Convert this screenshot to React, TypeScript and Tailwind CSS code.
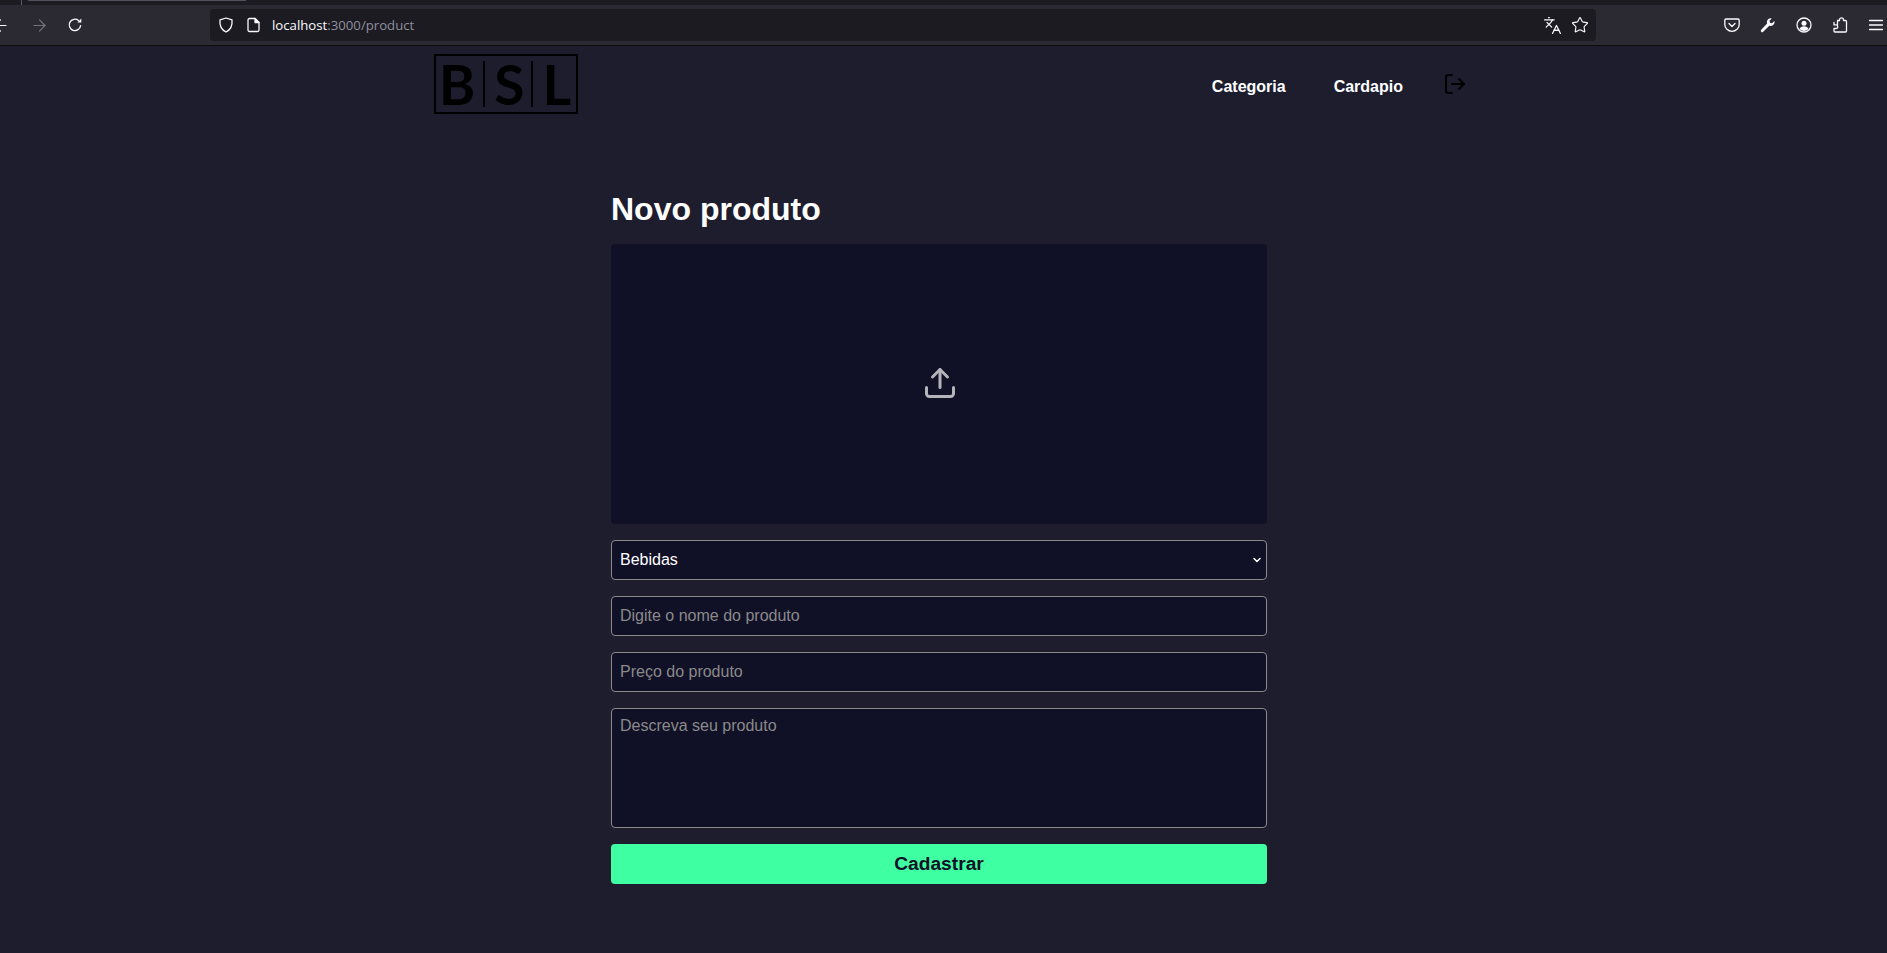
import { ArrowLeft, ArrowRight, Languages, Star, LogOut, Upload, ChevronDown } from "lucide-react";

function Ico({ children, className = "" }: { children: React.ReactNode; className?: string }) {
  return (
    <svg width="16" height="16" viewBox="0 0 16 16" fill="none" stroke="currentColor" strokeWidth="1.3" strokeLinejoin="round" strokeLinecap="round" className={"shrink-0 " + className}>
      {children}
    </svg>
  );
}

function Toolbar() {
  return (
    <div className="flex h-[46px] flex-col bg-[#2b2a33] font-['Open_Sans',sans-serif]">
      <div className="flex h-[5px] bg-[#1c1b22]">
        <div className="ml-[21px] h-[5px] w-px bg-[#5b5b66]" />
        <div className="ml-[6px] h-px w-[218px] bg-[#52525e]" />
      </div>
      <div className="flex flex-1 items-center border-b border-[#0c0c0d] text-[#fbfbfe]">
        <div className="flex w-[210px] items-center">
          <ArrowLeft size={19} strokeWidth={1.4} className="ml-[-9px]" />
          <ArrowRight size={19} strokeWidth={1.4} className="ml-[20px] text-[#75747c]" />
          <Ico className="ml-[18px]">
            <path d="M13.6 8.6A5.7 5.7 0 1 1 11.5 3.4" />
            <path d="M14.3 1.4v4h-4z" fill="currentColor" stroke="none" />
          </Ico>
        </div>
        <div className="flex h-[32px] w-[1386px] items-center rounded bg-[#1c1b22] pl-[8px] pr-[8px]">
          <Ico>
            <path d="M8 1 2 2.8C1.5 8 2.8 12.6 8 15c5.2-2.4 6.500-7 6-12.200Z" />
          </Ico>
          <Ico className="ml-[12px]">
            <path d="M3.500 1.500h5.500l4 4v7.500a1.500 1.500 0 0 1-1.500 1.500h-8a1.500 1.500 0 0 1-1.500-1.500v-10a1.500 1.500 0 0 1 1.500-1.500Z" />
            <path d="M9 1.500v4h4z" fill="currentColor" />
          </Ico>
          <span className="ml-[10px] translate-y-[1px] text-[13.2px]">
            localhost<span className="text-[#8f8f9d]">:3000/product</span>
          </span>
          <Languages size={19} strokeWidth={1.6} className="ml-auto" />
          <Star size={18} strokeWidth={1.5} className="ml-[9px] mr-[-1px]" />
        </div>
        <div className="ml-[128px] flex items-center gap-[20px]">
          <Ico>
            <path d="M2 2h12a1.200 1.200 0 0 1 1.200 1.200V7.500a7.200 6.800 0 0 1-14.400 0V3.200A1.200 1.200 0 0 1 2 2Z" />
            <path d="M5 6.500 8 9.500l3-3" />
          </Ico>
          <Ico>
            <path d="M10.500 1.200a4 4 0 0 0-3.400 5.400L1.200 12.700a1.400 1.400 0 0 0 2 2l6.100-5.900a4 4 0 0 0 5.300-3.800l-.2-1-2.400 2.300-2-.5-.5-2 2.300-2.300z" fill="currentColor" stroke="none" />
          </Ico>
          <Ico>
            <circle cx="8" cy="8" r="7" />
            <circle cx="8" cy="6.200" r="2.500" fill="currentColor" stroke="none" />
            <path d="M3.500 12c.8-2 2.500-2.800 4.500-2.800s3.700.8 4.500 2.800a6 6 0 0 1-9 0Z" fill="currentColor" stroke="none" />
          </Ico>
          <Ico>
            <path d="M7.500 3.500V2.800a2 2 0 0 1 4 0v.7h2a1 1 0 0 1 1 1V14a1 1 0 0 1-1 1H3a1 1 0 0 1-1-1v-2.500h2a1.800 1.800 0 0 0 0-3.600H2V5.500" />
            <path d="M7.500 3.500H5.500V7.900" />
          </Ico>
          <Ico>
            <path d="M1.500 3.500h13M1.500 8h13M1.500 12.500h13" />
          </Ico>
        </div>
      </div>
    </div>
  );
}

function Logo() {
  return (
    <div className="flex h-[60px] w-[144px] items-center border-2 border-black pl-[3px] font-['Lato',sans-serif] text-[55px] leading-none font-bold text-black">
      <span>B</span>
      <span className="ml-[8px] h-[46px] w-[2px] bg-black" />
      <span className="ml-[9px]">S</span>
      <span className="ml-[7px] h-[46px] w-[2px] bg-black" />
      <span className="ml-[9px]">L</span>
    </div>
  );
}

export default function App() {
  const field = "h-10 w-full rounded border border-[#8a8a8a] bg-[#101026] px-2 text-base text-white outline-none placeholder:text-[#8a8a8a]";
  return (
    <div className="min-h-[953px] bg-[#1d1d2e] font-['Liberation_Sans',sans-serif]">
      <Toolbar />
      <header className="ml-[434px] mt-2 flex h-[60px] w-[1033px] items-center">
        <Logo />
        <nav className="ml-auto flex translate-y-[3px] items-center font-bold text-white">
          <a>Categoria</a>
          <a className="ml-12">Cardapio</a>
          <LogOut size={24} strokeWidth={2} className="ml-10 -translate-y-[3px] text-black" />
        </nav>
      </header>
      <main className="ml-[611px] mt-[77px] flex w-[656px] flex-col">
        <h1 className="mb-[17px] h-9 text-[32px] leading-9 font-bold text-white">Novo produto</h1>
        <div className="flex h-[280px] items-center justify-center rounded bg-[#101026]">
          <Upload size={36} strokeWidth={2} className="translate-x-px -translate-y-px text-[#b4b4ba]" />
        </div>
        <div className="relative mt-4">
          <select className={field + " appearance-none"}>
            <option>Bebidas</option>
          </select>
          <ChevronDown size={12} strokeWidth={3} className="pointer-events-none absolute right-[4px] top-[14px] text-white" />
        </div>
        <input className={field + " mt-4"} placeholder="Digite o nome do produto" />
        <input className={field + " mt-4"} placeholder="Preço do produto" />
        <textarea className={field + " mt-4 h-[120px] resize-none pt-[5px]"} placeholder="Descreva seu produto" />
        <button className="mt-4 h-10 w-full rounded bg-[#3fffa3] text-[19.2px] font-bold text-[#101026]">Cadastrar</button>
      </main>
    </div>
  );
}
